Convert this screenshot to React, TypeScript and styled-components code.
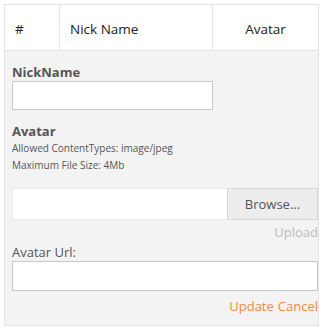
import styled, { createGlobalStyle } from 'styled-components';

const GlobalStyle = createGlobalStyle`
  body {
    margin: 0;
    background: #fff;
    font-family: 'Open Sans', 'Noto Sans', sans-serif;
  }
`;

const Wrapper = styled.div`
  padding: 4px 4px 0 4px;
  width: 315px;
`;

const HeaderRow = styled.div`
  display: grid;
  grid-template-columns: 54px 153px 1fr;
  border: 1px solid #e3e3e3;
  box-sizing: border-box;
  height: 47px;
`;

const HeadCell = styled.div<{ $center?: boolean; $divider?: boolean }>`
  display: flex;
  align-items: center;
  justify-content: ${(p) => (p.$center ? 'center' : 'flex-start')};
  padding-left: ${(p) => (p.$center ? '0' : '10px')};
  border-left: ${(p) => (p.$divider ? '1px solid #e3e3e3' : 'none')};
  font-size: 13.5px;
  color: #222;
  padding-top: 2px;
`;

const Panel = styled.div`
  background: #f3f3f3;
  border: 1px solid #e3e3e3;
  border-top: none;
  padding: 12px 0 10px 7px;
  height: 275px;
  box-sizing: border-box;
  display: flex;
  flex-direction: column;
`;

const Label = styled.div<{ $bold?: boolean }>`
  font-size: 13px;
  font-weight: ${(p) => (p.$bold ? 700 : 400)};
  color: #555;
  line-height: 18px;
`;

const TextInput = styled.input<{ $width?: string; $height: number }>`
  box-sizing: border-box;
  width: ${(p) => p.$width ?? '100%'};
  height: ${(p) => p.$height}px;
  border: 1px solid #c8c8c8;
  background: #fff;
  margin: 0;
  outline: none;
`;

const Hint = styled.div`
  font-size: 10px;
  color: #555;
  line-height: 17px;
`;

const FileGroup = styled.div`
  display: flex;
  height: 35px;
  margin-top: 14px;
`;

const FileField = styled.div`
  flex: 1;
  background: #fff;
  border: 1px solid #ececec;
  border-right: none;
`;

const Browse = styled.div`
  width: 91px;
  display: flex;
  align-items: center;
  justify-content: center;
  background: #ededed;
  border: 1px solid #d8d8d8;
  font-size: 13px;
  color: #555;
  box-sizing: border-box;
`;

const LinkRow = styled.div<{ $color: string }>`
  display: flex;
  justify-content: flex-end;
  gap: 4px;
  font-size: 13px;
  color: ${(p) => p.$color};
  line-height: 18px;
`;

export default function App() {
  return (
    <>
      <GlobalStyle />
      <Wrapper>
        <HeaderRow>
          <HeadCell>#</HeadCell>
          <HeadCell $divider>Nick Name</HeadCell>
          <HeadCell $divider $center>Avatar</HeadCell>
        </HeaderRow>
        <Panel>
          <Label $bold>NickName</Label>
          <TextInput $width="201px" $height={31} />
          <Label $bold style={{ marginTop: 12 }}>Avatar</Label>
          <Hint>Allowed ContentTypes: image/jpeg</Hint>
          <Hint>Maximum File Size: 4Mb</Hint>
          <FileGroup>
            <FileField />
            <Browse>Browse...</Browse>
          </FileGroup>
          <LinkRow $color="#bcbcbc" style={{ marginTop: 3 }}>Upload</LinkRow>
          <Label style={{ marginTop: 2 }}>Avatar Url:</Label>
          <TextInput $height={32} />
          <LinkRow $color="#f5883f" style={{ marginTop: 6 }}>
            <span>Update</span>
            <span>Cancel</span>
          </LinkRow>
        </Panel>
      </Wrapper>
    </>
  );
}
